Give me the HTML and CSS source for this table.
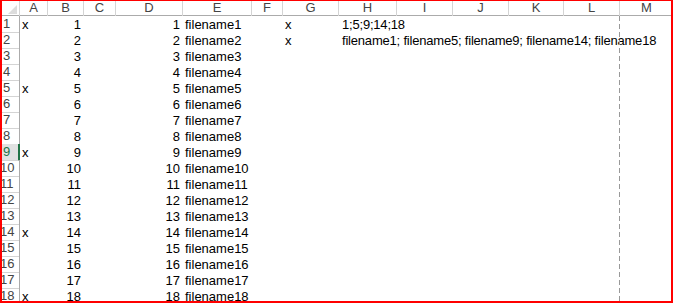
FILE: index.html
```html
<!DOCTYPE html>
<html>
<head>
<meta charset="utf-8">
<link rel="stylesheet" href="styles.css">
</head>
<body>
<div class="sheet">
  <div class="row head">
    <div class="corner"><span class="tri"></span></div>
    <div class="ch">A</div><div class="ch">B</div><div class="ch">C</div><div class="ch">D</div><div class="ch">E</div><div class="ch">F</div><div class="ch">G</div><div class="ch">H</div><div class="ch">I</div><div class="ch">J</div><div class="ch">K</div><div class="ch">L</div><div class="ch last">M</div>
  </div>
  <div class="row"><div class="rh">1</div><div class="c">x</div><div class="c num">1</div><div class="c"></div><div class="c num">1</div><div class="c">filename1</div><div class="c"></div><div class="c">x</div><div class="c list">1;5;9;14;18</div></div>
  <div class="row"><div class="rh">2</div><div class="c"></div><div class="c num">2</div><div class="c"></div><div class="c num">2</div><div class="c">filename2</div><div class="c"></div><div class="c">x</div><div class="c list">filename1; filename5; filename9; filename14; filename18</div></div>
  <div class="row"><div class="rh">3</div><div class="c"></div><div class="c num">3</div><div class="c"></div><div class="c num">3</div><div class="c">filename3</div></div>
  <div class="row"><div class="rh">4</div><div class="c"></div><div class="c num">4</div><div class="c"></div><div class="c num">4</div><div class="c">filename4</div></div>
  <div class="row"><div class="rh">5</div><div class="c">x</div><div class="c num">5</div><div class="c"></div><div class="c num">5</div><div class="c">filename5</div></div>
  <div class="row"><div class="rh">6</div><div class="c"></div><div class="c num">6</div><div class="c"></div><div class="c num">6</div><div class="c">filename6</div></div>
  <div class="row"><div class="rh">7</div><div class="c"></div><div class="c num">7</div><div class="c"></div><div class="c num">7</div><div class="c">filename7</div></div>
  <div class="row"><div class="rh">8</div><div class="c"></div><div class="c num">8</div><div class="c"></div><div class="c num">8</div><div class="c">filename8</div></div>
  <div class="row"><div class="rh sel">9</div><div class="c">x</div><div class="c num">9</div><div class="c"></div><div class="c num">9</div><div class="c">filename9</div></div>
  <div class="row"><div class="rh">10</div><div class="c"></div><div class="c num">10</div><div class="c"></div><div class="c num">10</div><div class="c">filename10</div></div>
  <div class="row"><div class="rh">11</div><div class="c"></div><div class="c num">11</div><div class="c"></div><div class="c num">11</div><div class="c">filename11</div></div>
  <div class="row"><div class="rh">12</div><div class="c"></div><div class="c num">12</div><div class="c"></div><div class="c num">12</div><div class="c">filename12</div></div>
  <div class="row"><div class="rh">13</div><div class="c"></div><div class="c num">13</div><div class="c"></div><div class="c num">13</div><div class="c">filename13</div></div>
  <div class="row"><div class="rh">14</div><div class="c">x</div><div class="c num">14</div><div class="c"></div><div class="c num">14</div><div class="c">filename14</div></div>
  <div class="row"><div class="rh">15</div><div class="c"></div><div class="c num">15</div><div class="c"></div><div class="c num">15</div><div class="c">filename15</div></div>
  <div class="row"><div class="rh">16</div><div class="c"></div><div class="c num">16</div><div class="c"></div><div class="c num">16</div><div class="c">filename16</div></div>
  <div class="row"><div class="rh">17</div><div class="c"></div><div class="c num">17</div><div class="c"></div><div class="c num">17</div><div class="c">filename17</div></div>
  <div class="row"><div class="rh">18</div><div class="c">x</div><div class="c num">18</div><div class="c"></div><div class="c num">18</div><div class="c">filename18</div></div>
  <div class="pagebreak"></div>
  <div class="frame"></div>
</div>
</body>
</html>
```

FILE: styles.css
```css
* { box-sizing: border-box; }
html, body { margin: 0; padding: 0; background: #fff; }
.sheet {
  position: relative;
  width: 673px;
  height: 303px;
  overflow: hidden;
  font-family: "Liberation Sans", Arial, sans-serif;
  font-size: 13px;
  color: #000;
  background: #fff;
}
.row {
  display: grid;
  grid-template-columns: 20px 28px 36px 32px 67px 69px 31px 56px 58px 56px 56px 55px 56px 53px;
  height: 16px;
}
.row.head { height: 16px; border-bottom: 1px solid #ababab; }
.corner {
  position: relative;
  border-right: 1px solid #d4d4d4;
}
.tri {
  position: absolute;
  right: 2px;
  bottom: 2px;
  width: 0;
  height: 0;
  border-left: 9px solid transparent;
  border-bottom: 9px solid #dcdcdc;
}
.ch {
  text-align: center;
  color: #444;
  line-height: 16px;
  border-right: 1px solid #d4d4d4;
}
.ch.last { border-right: none; }
.rh {
  color: #444;
  line-height: 16px;
  text-align: center;
  padding-right: 6px;
  border-right: 1px solid #ababab;
  border-bottom: 1px solid #d4d4d4;
}
.rh.sel {
  background: #e1e1e1;
  color: #217346;
  border-right: 2px solid #217346;
  padding-right: 5px;
}
.c {
  line-height: 16px;
  white-space: nowrap;
  overflow: visible;
  padding-left: 2px;
  padding-top: 1px;
}
.c.num {
  text-align: right;
  padding-left: 0;
  padding-right: 3px;
}
.c.list {
  padding-left: 3px;
  letter-spacing: -0.2px;
}
.pagebreak {
  position: absolute;
  left: 619px;
  top: 16px;
  width: 1px;
  bottom: 0;
  background: repeating-linear-gradient(to bottom, #999 0 5px, transparent 5px 8px);
}
.frame {
  position: absolute;
  inset: 0;
  border: 2px solid #ff0000;
  border-top-width: 1px;
  pointer-events: none;
}
```
